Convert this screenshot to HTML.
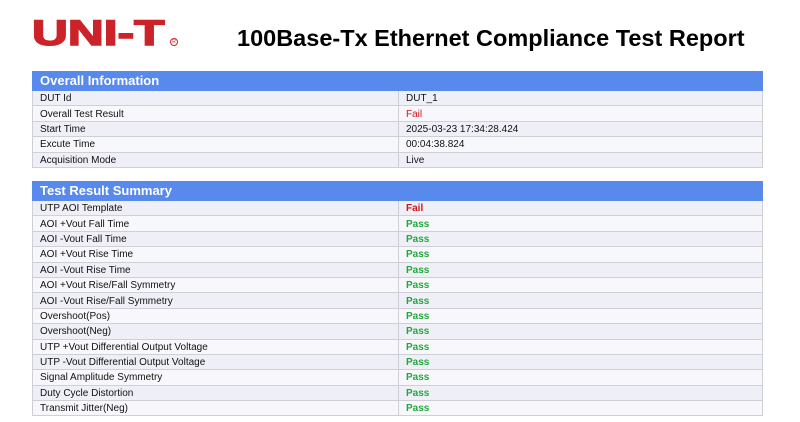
<!DOCTYPE html>
<html><head><style>
body{margin:0;width:800px;height:422px;background:#fff;font-family:"Liberation Sans",Arial,sans-serif;position:relative;overflow:hidden}
.logo{position:absolute;left:32px;top:15px;font-weight:bold;font-size:35px;color:#cc2229;-webkit-text-stroke:1.5px #cc2229;transform:scaleX(1.42);transform-origin:left top;line-height:38px;letter-spacing:0}
.reg{position:absolute;left:170px;top:38px;width:6px;height:6px;border:1px solid #d0262c;border-radius:50%;font-size:5px;color:#d0262c;text-align:center;line-height:6px}
.title{position:absolute;left:237px;top:25px;font-weight:bold;font-size:23.5px;color:#000;white-space:nowrap}
table{position:absolute;left:32px;width:731px;border-collapse:collapse;font-size:10px;color:#111}
th{background:#5889ec;color:#fff;text-align:left;font-size:13px;height:19px;line-height:18px;padding:0 0 0 7px;border:1px solid #5889ec;box-sizing:border-box}
td{height:15.4px;padding:1px 0 0 7px;border:1px solid #cfcfd6;line-height:13px;vertical-align:middle;box-sizing:border-box}
tr:nth-child(odd) td{background:#eff0f7}
tr:nth-child(even) td{background:#f8f8fc}
td.k{width:366px}
.f{color:#d4141c;font-weight:bold}
.p{color:#22a83a;font-weight:bold}
</style></head><body>
<div class="logo">UNI-T</div><div class="reg">R</div>
<div class="title">100Base-Tx Ethernet Compliance Test Report</div>
<table style="top:71px">
<thead><tr><th colspan="2">Overall Information</th></tr></thead>
<tbody>
<tr><td class="k">DUT Id</td><td>DUT_1</td></tr>
<tr><td class="k">Overall Test Result</td><td class="f" style="font-weight:normal">Fail</td></tr>
<tr><td class="k">Start Time</td><td>2025-03-23 17:34:28.424</td></tr>
<tr><td class="k">Excute Time</td><td>00:04:38.824</td></tr>
<tr><td class="k">Acquisition Mode</td><td>Live</td></tr>
</tbody></table>
<table style="top:181px">
<thead><tr><th colspan="2">Test Result Summary</th></tr></thead>
<tbody>
<tr><td class="k">UTP AOI Template</td><td class="f">Fail</td></tr>
<tr><td class="k">AOI +Vout Fall Time</td><td class="p">Pass</td></tr>
<tr><td class="k">AOI -Vout Fall Time</td><td class="p">Pass</td></tr>
<tr><td class="k">AOI +Vout Rise Time</td><td class="p">Pass</td></tr>
<tr><td class="k">AOI -Vout Rise Time</td><td class="p">Pass</td></tr>
<tr><td class="k">AOI +Vout Rise/Fall Symmetry</td><td class="p">Pass</td></tr>
<tr><td class="k">AOI -Vout Rise/Fall Symmetry</td><td class="p">Pass</td></tr>
<tr><td class="k">Overshoot(Pos)</td><td class="p">Pass</td></tr>
<tr><td class="k">Overshoot(Neg)</td><td class="p">Pass</td></tr>
<tr><td class="k">UTP +Vout Differential Output Voltage</td><td class="p">Pass</td></tr>
<tr><td class="k">UTP -Vout Differential Output Voltage</td><td class="p">Pass</td></tr>
<tr><td class="k">Signal Amplitude Symmetry</td><td class="p">Pass</td></tr>
<tr><td class="k">Duty Cycle Distortion</td><td class="p">Pass</td></tr>
<tr><td class="k">Transmit Jitter(Neg)</td><td class="p">Pass</td></tr>
</tbody></table>
</body></html>
